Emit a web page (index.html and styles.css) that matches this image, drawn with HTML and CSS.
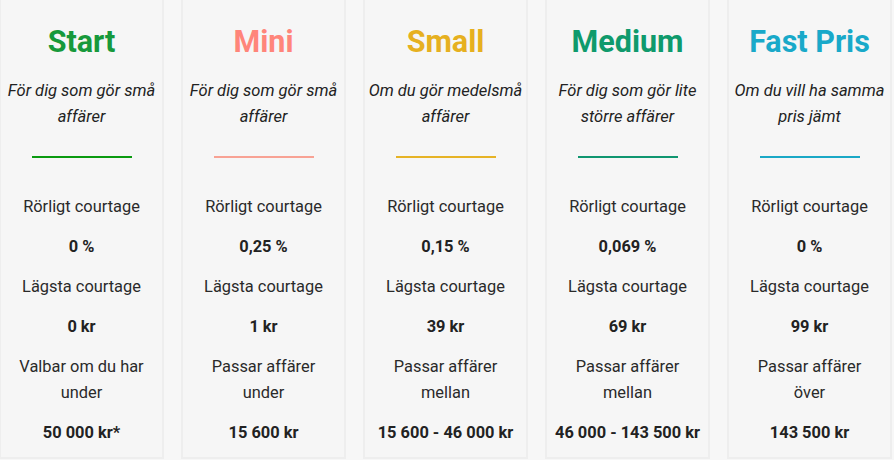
FILE: index.html
```html
<!DOCTYPE html>
<html lang="sv">
<head>
<meta charset="utf-8">
<title>Courtageklasser</title>
<link rel="stylesheet" href="styles.css">
</head>
<body>
<div class="plans">
  <div class="plan plan-start">
    <h2 class="plan-title">Start</h2>
    <p class="plan-desc">För dig som gör små affärer</p>
    <hr class="plan-line">
    <p class="plan-label">Rörligt courtage</p>
    <p class="plan-value">0 %</p>
    <p class="plan-label">Lägsta courtage</p>
    <p class="plan-value">0 kr</p>
    <p class="plan-label">Valbar om du har under</p>
    <p class="plan-value">50 000 kr*</p>
  </div>
  <div class="plan plan-mini">
    <h2 class="plan-title">Mini</h2>
    <p class="plan-desc">För dig som gör små affärer</p>
    <hr class="plan-line">
    <p class="plan-label">Rörligt courtage</p>
    <p class="plan-value">0,25 %</p>
    <p class="plan-label">Lägsta courtage</p>
    <p class="plan-value">1 kr</p>
    <p class="plan-label">Passar affärer under</p>
    <p class="plan-value">15 600 kr</p>
  </div>
  <div class="plan plan-small">
    <h2 class="plan-title">Small</h2>
    <p class="plan-desc">Om du gör medelsmå affärer</p>
    <hr class="plan-line">
    <p class="plan-label">Rörligt courtage</p>
    <p class="plan-value">0,15 %</p>
    <p class="plan-label">Lägsta courtage</p>
    <p class="plan-value">39 kr</p>
    <p class="plan-label">Passar affärer mellan</p>
    <p class="plan-value">15 600 - 46 000 kr</p>
  </div>
  <div class="plan plan-medium">
    <h2 class="plan-title">Medium</h2>
    <p class="plan-desc">För dig som gör lite större affärer</p>
    <hr class="plan-line">
    <p class="plan-label">Rörligt courtage</p>
    <p class="plan-value">0,069 %</p>
    <p class="plan-label">Lägsta courtage</p>
    <p class="plan-value">69 kr</p>
    <p class="plan-label">Passar affärer mellan</p>
    <p class="plan-value">46 000 - 143 500 kr</p>
  </div>
  <div class="plan plan-fast">
    <h2 class="plan-title">Fast Pris</h2>
    <p class="plan-desc">Om du vill ha samma pris jämt</p>
    <hr class="plan-line">
    <p class="plan-label">Rörligt courtage</p>
    <p class="plan-value">0 %</p>
    <p class="plan-label">Lägsta courtage</p>
    <p class="plan-value">99 kr</p>
    <p class="plan-label">Passar affärer över</p>
    <p class="plan-value">143 500 kr</p>
  </div>
</div>
</body>
</html>
```
FILE: styles.css
```css
html, body {
  margin: 0;
  padding: 0;
  background: #f7f7f7;
  font-family: Roboto, "Liberation Sans", Arial, sans-serif;
  color: #222;
  overflow: hidden;
}

.plans {
  display: flex;
  gap: 17px;
  margin: -2px 0 0 -1px;
  height: 461px;
  box-sizing: border-box;
}

.plan {
  width: 165px;
  flex: none;
  box-sizing: border-box;
  border: 2px solid #eeeeee;
  background: #f6f6f6;
  padding: 22px 3px 0;
  text-align: center;
}

.plan-title {
  margin: 0;
  font-size: 30.5px;
  line-height: 40px;
  font-weight: 700;
}

.plan-desc {
  margin: 16px 0 0;
  font-size: 16.5px;
  line-height: 26px;
  font-style: italic;
  color: #222;
}

.plan-line {
  width: 100px;
  height: 2px;
  border: 0;
  margin: 26px auto 36px;
}

.plan-label {
  margin: 0;
  font-size: 16.4px;
  line-height: 26px;
  color: #2a2a2a;
  padding: 0 9px;
}

.plan-value {
  margin: 14px 0;
  font-size: 16.4px;
  line-height: 26px;
  font-weight: 700;
  color: #222;
}

.plan-start .plan-title { color: #17993b; }
.plan-start .plan-line { background: #0a9a10; }
.plan-mini .plan-title { color: #ff857a; }
.plan-mini .plan-line { background: #f8a294; }
.plan-small .plan-title { color: #e6b020; }
.plan-small .plan-line { background: #e6b326; }
.plan-medium .plan-title { color: #0f9a6c; }
.plan-medium .plan-line { background: #109670; }
.plan-fast .plan-title { color: #19a9c9; }
.plan-fast .plan-line { background: #1aa8c6; }
```
